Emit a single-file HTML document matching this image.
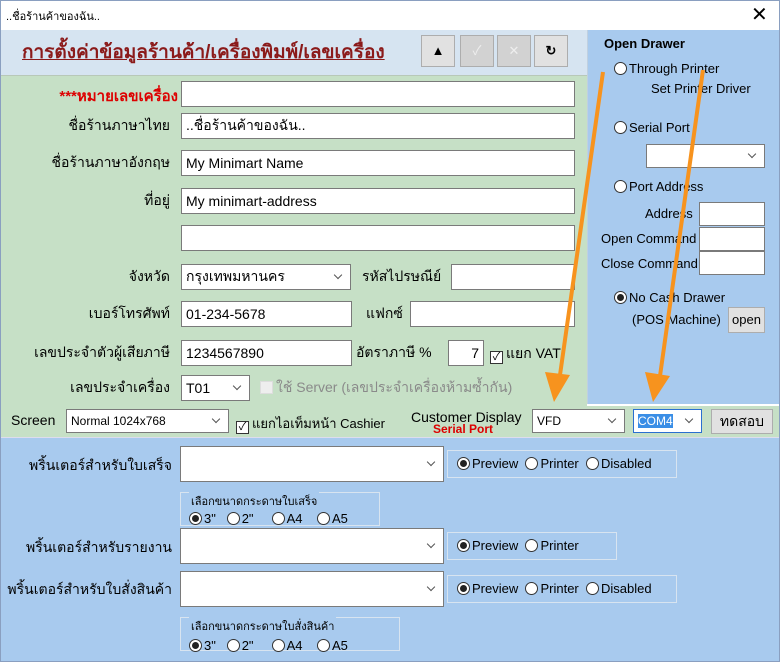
<!DOCTYPE html>
<html><head><meta charset="utf-8"><style>
*{box-sizing:border-box;margin:0;padding:0}
body{width:780px;height:662px;position:relative;overflow:hidden;background:#fff;font-family:"Liberation Sans","Noto Sans CJK SC",sans-serif;font-size:13px;color:#000}
.a{position:absolute}
.in{position:absolute;background:#fff;border:1px solid #7a7a7a;height:26px;padding:0 4px;font-size:14px;white-space:nowrap;display:flex;align-items:center}
.sel::after{content:"";position:absolute;right:9px;top:50%;margin-top:-5px;width:5px;height:5px;border-right:1px solid #555;border-bottom:1px solid #555;transform:rotate(45deg)}
.lb{position:absolute;text-align:right;white-space:nowrap;font-size:14px}
.rd{display:inline-block;width:13px;height:13px;border:1px solid #333;border-radius:50%;background:#fff;vertical-align:-2px;margin-right:2px;position:relative}
.rd.on::after{content:"";position:absolute;left:2px;top:2px;width:7px;height:7px;border-radius:50%;background:#222}
.cb{display:inline-block;width:13px;height:13px;border:1px solid #333;background:#fff;vertical-align:-2px;margin-right:3px;font-size:11px;line-height:11px;text-align:center}
.btn{position:absolute;background:#e1e1e1;border:1px solid #adadad;text-align:center}
.grp{position:absolute;border:1px solid #d8e4f0;background:#a8caee;font-size:13px;white-space:nowrap}
</style></head><body>
<div class="a" style="left:0;top:0;width:780px;height:662px;border:1px solid #8a9fc0"></div>
<div class="a" style="left:6px;top:7px;font-size:11px">..ชื่อร้านค้าของฉัน..</div>
<div class="a" style="left:751px;top:2px;font-size:20px">✕</div>
<div class="a" style="left:1px;top:30px;width:586px;height:45px;background:#d6e4f1"></div>
<div class="a" style="left:22px;top:37px;font-size:19px;font-weight:bold;color:#8b1a1a;text-decoration:underline">การตั้งค่าข้อมูลร้านค้า/เครื่องพิมพ์/เลขเครื่อง</div>
<div class="btn" style="left:421px;top:35px;width:34px;height:32px;font-size:13px;line-height:30px">▲</div>
<div class="btn" style="left:460px;top:35px;width:34px;height:32px;background:#d2d2d2;color:#eee;line-height:30px">✓</div>
<div class="btn" style="left:497px;top:35px;width:34px;height:32px;background:#d2d2d2;color:#eee;line-height:30px">✕</div>
<div class="btn" style="left:534px;top:35px;width:34px;height:32px;font-weight:bold;line-height:30px">↻</div>
<div class="a" style="left:1px;top:75px;width:586px;height:331px;background:#c6e0c6;border-top:1px solid #b8c8b8"></div>
<div class="a" style="left:1px;top:406px;width:778px;height:31px;background:#c6e0c6"></div>
<div class="a" style="left:587px;top:30px;width:192px;height:374px;background:#a8caee;border-left:1px solid #c0d0e0"></div>
<div class="a" style="left:604px;top:36px;font-weight:bold;font-size:13px">Open Drawer</div>
<div class="a" style="left:614px;top:61px;font-size:13px"><span class="rd"></span>Through Printer</div>
<div class="a" style="left:651px;top:81px;font-size:13px">Set Printer Driver</div>
<div class="a" style="left:614px;top:120px;font-size:13px"><span class="rd"></span>Serial Port</div>
<div class="in sel" style="left:646px;top:144px;width:119px;height:24px"></div>
<div class="a" style="left:614px;top:179px;font-size:13px"><span class="rd"></span>Port Address</div>
<div class="a" style="left:645px;top:206px;font-size:13px">Address</div>
<div class="in" style="left:699px;top:202px;width:66px;height:24px"></div>
<div class="a" style="left:601px;top:231px;font-size:13px">Open Command</div>
<div class="in" style="left:699px;top:227px;width:66px;height:24px"></div>
<div class="a" style="left:601px;top:256px;font-size:13px">Close Command</div>
<div class="in" style="left:699px;top:251px;width:66px;height:24px"></div>
<div class="a" style="left:614px;top:290px;font-size:13px"><span class="rd on"></span>No Cash Drawer</div>
<div class="a" style="left:632px;top:312px;font-size:13px">(POS Machine)</div>
<div class="btn" style="left:728px;top:307px;width:37px;height:26px;line-height:24px;font-size:13px">open</div>
<div class="lb" style="right:602px;top:84px;color:#d00;font-weight:bold;font-size:15px">***หมายเลขเครื่อง</div>
<div class="in" style="left:181px;top:81px;width:394px"></div>
<div class="lb" style="right:610px;top:115px">ชื่อร้านภาษาไทย</div>
<div class="in" style="left:181px;top:113px;width:394px">..ชื่อร้านค้าของฉัน..</div>
<div class="lb" style="right:610px;top:152px">ชื่อร้านภาษาอังกฤษ</div>
<div class="in" style="left:181px;top:150px;width:394px">My Minimart Name</div>
<div class="lb" style="right:610px;top:190px">ที่อยู่</div>
<div class="in" style="left:181px;top:188px;width:394px">My minimart-address</div>
<div class="in" style="left:181px;top:225px;width:394px"></div>
<div class="lb" style="right:610px;top:266px">จังหวัด</div>
<div class="in sel" style="left:181px;top:264px;width:170px">กรุงเทพมหานคร</div>
<div class="lb" style="left:362px;top:266px">รหัสไปรษณีย์</div>
<div class="in" style="left:451px;top:264px;width:124px"></div>
<div class="lb" style="right:610px;top:303px">เบอร์โทรศัพท์</div>
<div class="in" style="left:181px;top:301px;width:171px">01-234-5678</div>
<div class="lb" style="left:366px;top:303px">แฟกซ์</div>
<div class="in" style="left:410px;top:301px;width:165px"></div>
<div class="lb" style="right:610px;top:342px">เลขประจำตัวผู้เสียภาษี</div>
<div class="in" style="left:181px;top:340px;width:171px">1234567890</div>
<div class="lb" style="left:356px;top:342px">อัตราภาษี %</div>
<div class="in" style="left:448px;top:340px;width:36px;justify-content:flex-end">7</div>
<div class="lb" style="left:490px;top:343px"><span class="cb">✓</span>แยก VAT</div>
<div class="lb" style="right:610px;top:377px">เลขประจำเครื่อง</div>
<div class="in sel" style="left:181px;top:375px;width:69px">T01</div>
<div class="lb" style="left:260px;top:377px;color:#8a8a8a"><span class="cb" style="border-color:#ddd;background:#eee"></span>ใช้ Server (เลขประจำเครื่องห้ามซ้ำกัน)</div>
<div class="lb" style="left:11px;top:412px;font-size:14px">Screen</div>
<div class="in sel" style="left:66px;top:409px;width:163px;height:24px;font-size:12px">Normal 1024x768</div>
<div class="lb" style="left:236px;top:413px;font-size:13px"><span class="cb">✓</span>แยกไอเท็มหน้า Cashier</div>
<div class="lb" style="left:411px;top:409px;font-size:14px">Customer Display</div>
<div class="lb" style="left:433px;top:422px;font-size:12px;color:#d00;font-weight:bold">Serial Port</div>
<div class="in sel" style="left:532px;top:409px;width:93px;height:24px;font-size:12px">VFD</div>
<div class="in sel" style="left:633px;top:409px;width:69px;height:24px;font-size:12px;border:1px solid #2a6fd0"><span style="background:#3a8ee6;color:#fff">COM4</span></div>
<div class="btn" style="left:711px;top:409px;width:62px;height:25px;font-size:14px;line-height:23px">ทดสอบ</div>
<div class="a" style="left:1px;top:437px;width:778px;height:224px;background:#a8caee;border-top:1px solid #dde"></div>
<div class="lb" style="right:608px;top:455px">พริ้นเตอร์สำหรับใบเสร็จ</div>
<div class="in sel" style="left:180px;top:446px;width:264px;height:36px"></div>
<div class="grp" style="left:447px;top:450px;width:230px;height:28px;padding:5px 0 0 9px"><span class="rd on"></span>Preview &nbsp;<span class="rd"></span>Printer &nbsp;<span class="rd"></span>Disabled</div>
<div class="grp" style="left:180px;top:492px;width:200px;height:34px;padding:0 0 0 8px"><div style="font-size:11px;margin-top:-7px;background:#a8caee;display:inline-block;padding:0 2px">เลือกขนาดกระดาษใบเสร็จ</div><div style="margin-top:1px"><span class="rd on"></span>3" &nbsp; <span class="rd"></span>2" &nbsp;&nbsp;&nbsp; <span class="rd"></span>A4 &nbsp;&nbsp; <span class="rd"></span>A5</div></div>
<div class="lb" style="right:608px;top:537px">พริ้นเตอร์สำหรับรายงาน</div>
<div class="in sel" style="left:180px;top:528px;width:264px;height:36px"></div>
<div class="grp" style="left:447px;top:532px;width:170px;height:28px;padding:5px 0 0 9px"><span class="rd on"></span>Preview &nbsp;<span class="rd"></span>Printer</div>
<div class="lb" style="right:608px;top:579px">พริ้นเตอร์สำหรับใบสั่งสินค้า</div>
<div class="in sel" style="left:180px;top:571px;width:264px;height:36px"></div>
<div class="grp" style="left:447px;top:575px;width:230px;height:28px;padding:5px 0 0 9px"><span class="rd on"></span>Preview &nbsp;<span class="rd"></span>Printer &nbsp;<span class="rd"></span>Disabled</div>
<div class="grp" style="left:180px;top:617px;width:220px;height:34px;padding:0 0 0 8px"><div style="font-size:11px;margin-top:-7px;background:#a8caee;display:inline-block;padding:0 2px">เลือกขนาดกระดาษใบสั่งสินค้า</div><div style="margin-top:3px"><span class="rd on"></span>3" &nbsp; <span class="rd"></span>2" &nbsp;&nbsp;&nbsp; <span class="rd"></span>A4 &nbsp;&nbsp; <span class="rd"></span>A5</div></div>
<svg class="a" style="left:0;top:0" width="780" height="662">
<line x1="603" y1="72" x2="560" y2="375" stroke="#f7931e" stroke-width="4"/>
<polygon points="545,372 570,375 554,402" fill="#f7931e"/>
<line x1="703" y1="70" x2="660" y2="376" stroke="#f7931e" stroke-width="4"/>
<polygon points="645,372 670,376 653,402" fill="#f7931e"/>
</svg>
</body></html>
